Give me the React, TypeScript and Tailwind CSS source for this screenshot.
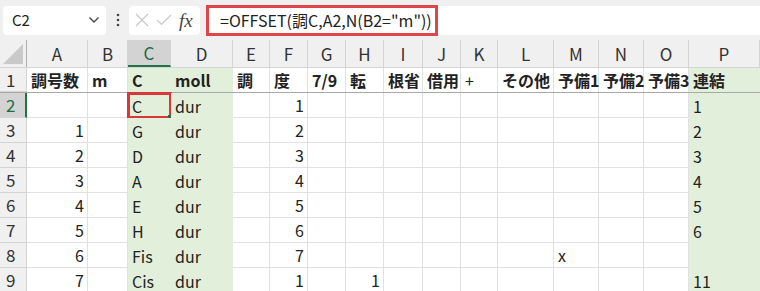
import React from 'react';

const font = { fontFamily: '"Noto Sans CJK JP", "Noto Sans", sans-serif' };

const cols = ['A', 'B', 'C', 'D', 'E', 'F', 'G', 'H', 'I', 'J', 'K', 'L', 'M', 'N', 'O', 'P'];
const widths = [
  'w-[61px]', 'w-[40px]', 'w-[43px]', 'w-[62px]', 'w-[37px]', 'w-[38px]', 'w-[38px]', 'w-[38px]',
  'w-[39px]', 'w-[38px]', 'w-[37px]', 'w-[56px]', 'w-[45px]', 'w-[45px]', 'w-[45px]', 'w-[71px]',
];
const green = [2, 3, 15];
const rightAligned = [0, 5, 7];

const headers = ['調号数', 'm', 'C', 'moll', '調', '度', '7/9', '転', '根省', '借用', '+', 'その他', '予備1', '予備2', '予備3', '連結'];

const rows: string[][] = [
  ['', '', 'C', 'dur', '', '1', '', '', '', '', '', '', '', '', '', '1'],
  ['1', '', 'G', 'dur', '', '2', '', '', '', '', '', '', '', '', '', '2'],
  ['2', '', 'D', 'dur', '', '3', '', '', '', '', '', '', '', '', '', '3'],
  ['3', '', 'A', 'dur', '', '4', '', '', '', '', '', '', '', '', '', '4'],
  ['4', '', 'E', 'dur', '', '5', '', '', '', '', '', '', '', '', '', '5'],
  ['5', '', 'H', 'dur', '', '6', '', '', '', '', '', '', '', '', '', '6'],
  ['6', '', 'Fis', 'dur', '', '7', '', '', '', '', '', '', 'x', '', '', ''],
  ['7', '', 'Cis', 'dur', '', '1', '', '1', '', '', '', '', '', '', '', '11'],
];

const FormulaBar = () => (
  <div className="flex items-center h-[40px] bg-[#f0f0f0]">
    <div className="ml-[3px] w-[103px] h-[29px] bg-white rounded-[4px] flex items-center justify-between pl-[9px] pr-[6px]">
      <span className="text-[15px] text-[#222]">C2</span>
      <svg width="12" height="8" viewBox="0 0 12 8">
        <path d="M1.5 1.5 L6 6 L10.5 1.5" fill="none" stroke="#444" strokeWidth="1.3" />
      </svg>
    </div>
    <div className="w-[23px] flex justify-center">
      <svg width="4" height="14" viewBox="0 0 4 14">
        <circle cx="2" cy="2" r="1.3" fill="#444" />
        <circle cx="2" cy="7" r="1.3" fill="#444" />
        <circle cx="2" cy="12" r="1.3" fill="#444" />
      </svg>
    </div>
    <div className="w-[71px] h-[29px] bg-white rounded-[4px] flex items-center pl-[6px] gap-[7px]">
      <svg width="14" height="14" viewBox="0 0 14 14">
        <path d="M1 1 L13 13 M13 1 L1 13" stroke="#c8c8c8" strokeWidth="1.2" />
      </svg>
      <svg width="16" height="12" viewBox="0 0 16 12">
        <path d="M1 6 L5.5 10.5 L15 1" fill="none" stroke="#c8c8c8" strokeWidth="1.2" />
      </svg>
      <span className="text-[19px] italic text-[#444] leading-none" style={{ fontFamily: '"Liberation Serif", serif' }}>
        fx
      </span>
    </div>
    <div className="ml-[6px] flex-1 h-[29px] bg-white flex items-center">
      <div className="w-[232px] h-[31px] border-[3px] border-[#e0454c] flex items-center pl-[11px] text-[16px] text-[#222]">
        =OFFSET(調C,A2,N(B2="m"))
      </div>
    </div>
  </div>
);

const ColumnHeader = () => (
  <div className="flex h-[28px] bg-[#f0f0f0] border-b border-[#d4d4d4]">
    <div className="w-[27px] h-full border-r border-[#b0b0b0] flex items-end justify-end p-[3px]">
      <svg width="20" height="20" viewBox="0 0 20 20">
        <path d="M20 0 L20 20 L0 20 Z" fill="#c9c9c9" />
      </svg>
    </div>
    {cols.map((c, i) => (
      <div
        key={c}
        className={`${widths[i]} h-full flex items-center justify-center text-[17px] ${
          c === 'C'
            ? 'bg-[#d3d3d3] text-[#1d6b44] border-b-2 border-[#217346] border-r border-r-[#d4d4d4]'
            : 'text-[#333] border-r border-[#d4d4d4]'
        }`}
      >
        {c}
      </div>
    ))}
  </div>
);

const Row = ({ num, cells, bold }: { num: number; cells: string[]; bold?: boolean }) => (
  <div className={`flex h-[25px] ${num === 1 ? 'border-b border-[#a8a8a8]' : ''}`}>
    <div
      className={`w-[27px] h-full flex items-center pl-[6px] text-[17px] border-b ${
        num === 2
          ? 'bg-[#d3d3d3] text-[#1d6b44] border-r-2 border-r-[#217346] border-b-[#d4d4d4]'
          : 'bg-[#f0f0f0] text-[#333] border-r border-[#d4d4d4]'
      }`}
    >
      {num}
    </div>
    {cells.map((v, i) => {
      const isGreen = green.includes(i);
      const isRight = !bold && rightAligned.includes(i);
      return (
        <div
          key={i}
          className={`${widths[i]} h-full relative flex items-center text-[16px] text-[#222] whitespace-nowrap ${
            isGreen ? 'bg-[#e2efda]' : `border-r border-[#e1e1e1] ${num === 1 ? '' : 'border-b'}`
          } ${isRight ? 'justify-end pr-[3px]' : 'pl-[4px]'} ${bold && v !== '+' ? 'font-bold text-[15px]' : ''}`}
        >
          {v}
          {num === 2 && i === 2 && (
            <div className="absolute left-[-1px] top-[-1px] w-[45px] h-[27px] border-[3px] border-[#d9383a]">
              <div className="absolute right-[-5px] bottom-[-5px] w-[6px] h-[6px] bg-[#217346]" />
            </div>
          )}
        </div>
      );
    })}
  </div>
);

export default function App() {
  return (
    <div className="w-[760px] h-[291px] overflow-hidden bg-white" style={font}>
      <FormulaBar />
      <ColumnHeader />
      <Row num={1} cells={headers} bold />
      {rows.map((r, i) => (
        <Row key={i} num={i + 2} cells={r} />
      ))}
    </div>
  );
}
